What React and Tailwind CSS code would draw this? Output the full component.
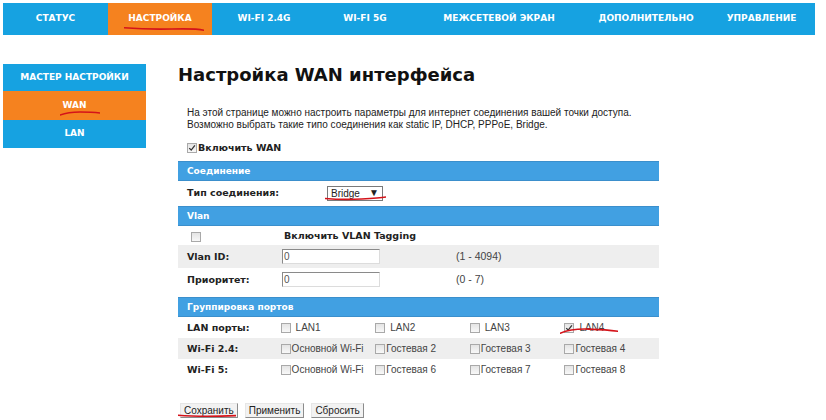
import React from 'react';

const navItems = [
  { label: 'СТАТУС', w: 'w-[105px]' },
  { label: 'НАСТРОЙКА', w: 'w-[104px]', active: true },
  { label: 'WI-FI 2.4G', w: 'w-[104px]' },
  { label: 'WI-FI 5G', w: 'w-[98px]' },
  { label: 'МЕЖСЕТЕВОЙ ЭКРАН', w: 'w-[170px]' },
  { label: 'ДОПОЛНИТЕЛЬНО', w: 'w-[124px]' },
  { label: 'УПРАВЛЕНИЕ', w: 'w-[107px]' },
];

const bold = "font-['DejaVu_Sans',sans-serif] font-bold";
const thin = "font-['Liberation_Sans',Arial,sans-serif]";

// red marker underline, as drawn over the screenshot
function Scribble({ className, d }) {
  return (
    <svg className={`absolute pointer-events-none ${className}`} viewBox="0 0 100 10" preserveAspectRatio="none">
      <path d={d} stroke="#d4131a" strokeWidth="1.6" fill="none" strokeLinecap="round" vectorEffect="non-scaling-stroke" />
    </svg>
  );
}

function Box({ checked }) {
  return (
    <span className="inline-flex w-[10px] h-[10px] shrink-0 items-center justify-center border border-[#a9a9a9] bg-gradient-to-b from-[#e4e4e4] to-[#f8f8f8]">
      {checked && (
        <svg viewBox="0 0 10 10" className="w-[8px] h-[8px]">
          <path d="M1.5 5.2 L4 7.6 L8.6 1.8" stroke="#333" strokeWidth="1.6" fill="none" />
        </svg>
      )}
    </span>
  );
}

function Header({ children, className = '' }) {
  return (
    <div className={`h-[20px] flex items-center pl-[9px] bg-[#41a0e2] border-y border-[#3b8fcc] text-white text-[9px] ${bold} ${className}`}>
      {children}
    </div>
  );
}

function Option({ checked, label, gap = 'gap-[5px]' }) {
  return (
    <div className={`w-[95px] flex items-center ${gap}`}>
      <Box checked={checked} />
      <span className={`text-[10px] text-[#444] ${thin}`}>{label}</span>
    </div>
  );
}

function PortRow({ label, gray, items, gap }) {
  return (
    <div className={`h-[21px] flex items-center ${gray ? 'bg-[#eeeeee]' : ''}`}>
      <div className={`w-[103px] pl-[9px] text-[9.5px] text-[#222] ${bold}`}>{label}</div>
      {items.map((it) => (
        <Option key={it.label} {...it} gap={gap} />
      ))}
    </div>
  );
}

function Button({ children, className = '' }) {
  return (
    <button className={`h-[15px] px-[3px] bg-[#f2f2f2] border border-t-[#e6e6e6] border-l-[#e6e6e6] border-r-[#8c8c8c] border-b-[#8c8c8c] text-[10px] leading-none text-[#222] ${thin} ${className}`}>
      {children}
    </button>
  );
}

export default function App() {
  return (
    <div className="relative w-[826px] h-[420px] bg-white overflow-hidden">
      {/* Top navigation */}
      <div className="mt-[3px] ml-[3px] w-[812px] h-[32px] flex bg-[#16a2e1]">
        {navItems.map((n) => (
          <div
            key={n.label}
            className={`${n.w} h-full flex items-center justify-center text-white text-[9px] ${bold} ${n.active ? 'bg-[#f5821f]' : ''}`}
          >
            {n.label}
          </div>
        ))}
      </div>

      <div className="flex">
        {/* Sidebar */}
        <div className={`ml-[3px] mt-[29px] w-[143px] text-white text-[9px] ${bold}`}>
          <div className="h-[27px] flex items-center justify-center bg-[#16a2e1]">МАСТЕР НАСТРОЙКИ</div>
          <div className="h-[29px] flex items-center justify-center bg-[#f5821f]">WAN</div>
          <div className="h-[28px] flex items-center justify-center bg-[#16a2e1]">LAN</div>
        </div>

        {/* Content */}
        <div className="ml-[32px] w-[481px]">
          <h1 className={`mt-[28px] text-[18px] leading-[24px] text-[#111] ${bold}`}>Настройка WAN интерфейса</h1>
          <p className={`mt-[20px] ml-[9px] text-[10px] leading-[12px] text-[#222] ${thin}`}>
            На этой странице можно настроить параметры для интернет соединения вашей точки доступа.
            <br />
            Возможно выбрать такие типо соединения как static IP, DHCP, PPPoE, Bridge.
          </p>
          <div className="mt-[10px] ml-[9px] flex items-center gap-[1px]">
            <Box checked />
            <span className={`text-[9.5px] text-[#222] ${bold}`}>Включить WAN</span>
          </div>

          <Header className="mt-[6px]">Соединение</Header>
          <div className="h-[24px] flex items-center">
            <div className={`w-[149px] pl-[9px] text-[9.5px] text-[#222] ${bold}`}>Тип соединения:</div>
            <div className={`w-[56px] h-[15px] flex items-center justify-between px-[3px] border border-[#7a7a7a] text-[10px] text-[#222] ${thin}`}>
              <span>Bridge</span>
              <span className="text-[10px] leading-none">▼</span>
            </div>
          </div>

          <Header className="mt-[1px]">Vlan</Header>
          <div className="h-[19px] flex items-center">
            <div className="w-[106px] pl-[13px]">
              <Box />
            </div>
            <span className={`text-[9.5px] text-[#222] ${bold}`}>Включить VLAN Tagging</span>
          </div>
          <div className="h-[23px] flex items-center bg-[#eeeeee]">
            <div className={`w-[104px] pl-[9px] text-[9.5px] text-[#222] ${bold}`}>Vlan ID:</div>
            <div className={`w-[98px] h-[15px] bg-white border border-t-[#8a8a8a] border-l-[#8a8a8a] border-r-[#dcdcdc] border-b-[#dcdcdc] pl-[1px] text-[10px] leading-[13px] text-[#555] ${thin}`}>0</div>
            <span className={`ml-[76px] text-[10.5px] text-[#444] ${thin}`}>(1 - 4094)</span>
          </div>
          <div className="h-[23px] flex items-center">
            <div className={`w-[104px] pl-[9px] text-[9.5px] text-[#222] ${bold}`}>Приоритет:</div>
            <div className={`w-[98px] h-[15px] bg-white border border-t-[#8a8a8a] border-l-[#8a8a8a] border-r-[#dcdcdc] border-b-[#dcdcdc] pl-[1px] text-[10px] leading-[13px] text-[#555] ${thin}`}>0</div>
            <span className={`ml-[76px] text-[10.5px] text-[#444] ${thin}`}>(0 - 7)</span>
          </div>

          <Header className="mt-[6px]">Группировка портов</Header>
          <PortRow
            label="LAN порты:"
            items={[{ label: 'LAN1' }, { label: 'LAN2' }, { label: 'LAN3' }, { label: 'LAN4', checked: true }]}
          />
          <PortRow
            label="Wi-Fi 2.4:"
            gray
            gap="gap-[1px]"
            items={[{ label: 'Основной Wi-Fi' }, { label: 'Гостевая 2' }, { label: 'Гостевая 3' }, { label: 'Гостевая 4' }]}
          />
          <PortRow
            label="Wi-Fi 5:"
            gap="gap-[1px]"
            items={[{ label: 'Основной Wi-Fi' }, { label: 'Гостевая 6' }, { label: 'Гостевая 7' }, { label: 'Гостевая 8' }]}
          />

          <div className="mt-[23px] ml-[2px] flex gap-[7px]">
            <Button>Сохранить</Button>
            <Button>Применить</Button>
            <Button>Сбросить</Button>
          </div>
        </div>
      </div>

      {/* marker annotations */}
      <Scribble className="left-[124px] top-[26px] w-[80px] h-[6px]" d="M0 3 Q30 6 60 5 T100 7" />
      <Scribble className="left-[60px] top-[111px] w-[40px] h-[5px]" d="M0 8 Q20 2 50 2 T100 4" />
      <Scribble className="left-[325px] top-[196px] w-[61px] h-[5px]" d="M0 5 Q30 8 60 6 T100 2" />
      <Scribble className="left-[560px] top-[327px] w-[58px] h-[7px]" d="M0 9 Q20 2 50 3 T100 6" />
      <Scribble className="left-[178px] top-[414px] w-[58px] h-[4px]" d="M0 3 Q40 8 100 4" />
    </div>
  );
}
